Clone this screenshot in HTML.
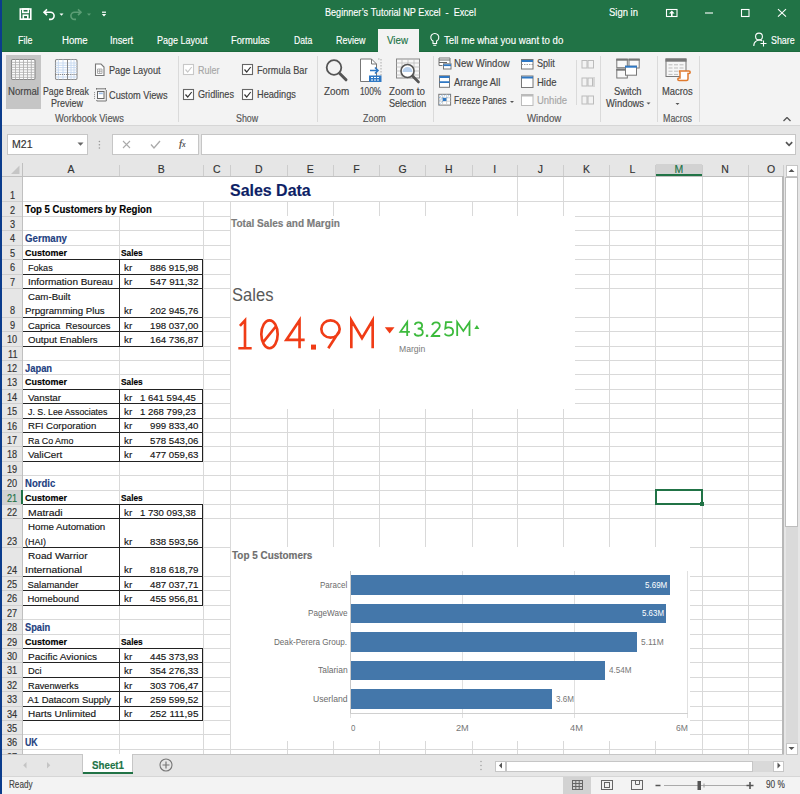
<!DOCTYPE html><html><head><meta charset="utf-8"><style>
*{margin:0;padding:0;box-sizing:border-box}
html,body{width:800px;height:794px;overflow:hidden;background:#fff;font-family:"Liberation Sans",sans-serif}
.a{position:absolute}
.t{position:absolute;white-space:nowrap;line-height:1;-webkit-text-stroke:0.15px currentColor}
svg{position:absolute;overflow:visible}
</style></head><body>

<div class="a" style="left:0.00px;top:0.00px;width:800.00px;height:52.00px;background:#217346;"></div>
<div class="a" style="left:0.00px;top:0.00px;width:2.00px;height:794.00px;background:#0b3c8c;"></div>
<div class="t" style="left:325.00px;top:8.31px;font-size:10.03px;font-family:'Liberation Sans',sans-serif;font-weight:normal;color:#fff;transform:scaleX(0.9077);transform-origin:0 0;">Beginner’s&#160;Tutorial&#160;NP&#160;Excel&#160;&#160;-&#160;&#160;Excel</div>
<div class="t" style="left:609.00px;top:8.19px;font-size:10.17px;font-family:'Liberation Sans',sans-serif;font-weight:normal;color:#fff;transform:scaleX(0.9315);transform-origin:0 0;">Sign in</div>
<svg style="left:0;top:0" width="120" height="28">
<g fill="none" stroke="#fff" stroke-width="1.6">
<rect x="20.3" y="9" width="10.5" height="10.2"/>
<rect x="22.8" y="9" width="5.5" height="3.4"/>
<rect x="23.3" y="15.2" width="4.5" height="4"/>
<path d="M44.5 12.2 H50.5 a3.6 3.6 0 0 1 0 7.2 H49" />
<path d="M47 9.3 L44 12.2 L47 15.1"/>
</g>
<path d="M59.5 13.6 h4 l-2 2.2z" fill="#fff"/>
<g fill="none" stroke="#5c9e76" stroke-width="1.6">
<path d="M80.5 12.2 H74.5 a3.6 3.6 0 0 0 0 7.2 H76" />
<path d="M78 9.3 L81 12.2 L78 15.1"/>
</g>
<path d="M87 13.6 h4 l-2 2.2z" fill="#5c9e76"/>
<rect x="102" y="11.6" width="4" height="1.2" fill="#fff"/>
<path d="M101.8 14 h4.4 l-2.2 2.6z" fill="#fff"/>
</svg>
<svg style="left:0;top:0" width="800" height="52">
<g fill="none" stroke="#fff" stroke-width="1.1">
<rect x="666.5" y="9.5" width="10.5" height="7"/>
<path d="M705 13 h8"/>
<rect x="741.5" y="9.5" width="7.5" height="7"/>
<path d="M778 9.2 l8 7.4 M786 9.2 l-8 7.4"/>
<circle cx="759" cy="36.5" r="3.4"/>
<path d="M753.8 46 a5.5 5.5 0 0 1 8.5 -5"/>
<path d="M763.5 40.5 v6 M760.5 43.5 h6"/>
<path d="M433 41 a4 4 0 1 1 3.6 0 v2.5 h-3.6z M433.3 45.3 h3"/>
</g>
<path d="M669 13.5 l2.8 -3 2.8 3z M671 13 h1.6 v3 h-1.6z" fill="#fff"/>
</svg>
<div class="t" style="left:18.40px;top:35.32px;font-size:10.61px;font-family:'Liberation Sans',sans-serif;font-weight:normal;color:#fff;transform:scaleX(0.8430);transform-origin:0 0;">File</div>
<div class="t" style="left:61.70px;top:35.32px;font-size:10.61px;font-family:'Liberation Sans',sans-serif;font-weight:normal;color:#fff;transform:scaleX(0.9072);transform-origin:0 0;">Home</div>
<div class="t" style="left:110.20px;top:35.32px;font-size:10.61px;font-family:'Liberation Sans',sans-serif;font-weight:normal;color:#fff;transform:scaleX(0.8708);transform-origin:0 0;">Insert</div>
<div class="t" style="left:156.70px;top:35.32px;font-size:10.61px;font-family:'Liberation Sans',sans-serif;font-weight:normal;color:#fff;transform:scaleX(0.8493);transform-origin:0 0;">Page Layout</div>
<div class="t" style="left:231.00px;top:35.32px;font-size:10.61px;font-family:'Liberation Sans',sans-serif;font-weight:normal;color:#fff;transform:scaleX(0.8769);transform-origin:0 0;">Formulas</div>
<div class="t" style="left:293.50px;top:35.32px;font-size:10.61px;font-family:'Liberation Sans',sans-serif;font-weight:normal;color:#fff;transform:scaleX(0.8155);transform-origin:0 0;">Data</div>
<div class="t" style="left:335.50px;top:35.32px;font-size:10.61px;font-family:'Liberation Sans',sans-serif;font-weight:normal;color:#fff;transform:scaleX(0.8448);transform-origin:0 0;">Review</div>
<div class="a" style="left:2.00px;top:51.00px;width:798.00px;height:1.00px;background:#1c6a3d;"></div>
<div class="a" style="left:377.50px;top:28.50px;width:41.00px;height:23.50px;background:#f3f3f3;"></div>
<div class="t" style="left:387.20px;top:35.32px;font-size:10.61px;font-family:'Liberation Sans',sans-serif;font-weight:normal;color:#217346;transform:scaleX(0.9205);transform-origin:0 0;">View</div>
<div class="t" style="left:444.40px;top:35.32px;font-size:10.61px;font-family:'Liberation Sans',sans-serif;font-weight:normal;color:#fff;transform:scaleX(0.9119);transform-origin:0 0;">Tell me what you want to do</div>
<div class="t" style="left:771.00px;top:34.82px;font-size:10.61px;font-family:'Liberation Sans',sans-serif;font-weight:normal;color:#fff;transform:scaleX(0.8366);transform-origin:0 0;">Share</div>
<div class="a" style="left:2.00px;top:52.00px;width:798.00px;height:73.50px;background:#f3f3f3;"></div>
<div class="a" style="left:2.00px;top:125.00px;width:798.00px;height:1.00px;background:#d6d6d6;"></div>
<div class="a" style="left:177.50px;top:56.00px;width:1.00px;height:65.50px;background:#dadada;"></div>
<div class="a" style="left:317.00px;top:56.00px;width:1.00px;height:65.50px;background:#dadada;"></div>
<div class="a" style="left:432.60px;top:56.00px;width:1.00px;height:65.50px;background:#dadada;"></div>
<div class="a" style="left:656.60px;top:56.00px;width:1.00px;height:65.50px;background:#dadada;"></div>
<div class="a" style="left:698.50px;top:56.00px;width:1.00px;height:65.50px;background:#dadada;"></div>
<div class="a" style="left:575.60px;top:60.00px;width:1.00px;height:45.00px;background:#dadada;"></div>
<div class="a" style="left:600.40px;top:56.00px;width:1.00px;height:65.50px;background:#dadada;"></div>
<div class="a" style="left:6.00px;top:55.00px;width:35.00px;height:54.40px;background:#c5c5c5;"></div>
<svg style="left:0;top:0" width="180" height="125">
<rect x="11.5" y="59.5" width="23.5" height="20" fill="#fff" stroke="#8a8a8a" stroke-width="1.1" rx="1.2"/>
<g stroke="#b0b0b0" stroke-width="0.9">
<path d="M11.5 62.3h23.5 M11.5 64.8h23.5 M11.5 67.3h23.5 M11.5 69.8h23.5 M11.5 72.3h23.5 M11.5 74.8h23.5 M11.5 77.3h23.5"/>
<path d="M15.5 59.5v20 M19.5 59.5v20 M23.5 59.5v20 M27.5 59.5v20 M31.3 59.5v20"/>
</g>
<rect x="55.5" y="59.5" width="21.5" height="20" fill="#fff" stroke="#8a8a8a" stroke-width="1.1" rx="1.2"/>
<g stroke="#c4d7ef" stroke-width="0.9">
<path d="M55.5 63h21.5 M55.5 65.3h21.5 M55.5 67.6h21.5 M55.5 70h21.5 M55.5 72.4h21.5 M55.5 77h21.5"/>
<path d="M58.3 59.5v20 M63 59.5v20 M71 59.5v20 M74 59.5v20"/>
</g>
<path d="M67.5 59.5v20" stroke="#8a8a8a" stroke-width="1"/>
<path d="M55.5 74.5h21.5" stroke="#777" stroke-width="0.9" stroke-dasharray="1.2 0.9"/>
<path d="M95.5 64 h5.5 l3 3 v8.5 h-8.5z" fill="#fff" stroke="#777" stroke-width="1.1"/>
<path d="M97.5 69 h4.5 v4.5 h-4.5z M99.7 69 v4.5 M97.5 71.2 h4.5" fill="none" stroke="#999" stroke-width="0.8"/>
<path d="M96.5 88.8 h9 M96.5 88 v1.6 M105.5 88 v1.6 M106.3 90 v11 h-9.5 v-1" fill="none" stroke="#777" stroke-width="1"/>
<rect x="97.5" y="91.5" width="6.5" height="7" fill="#fff" stroke="#666" stroke-width="1"/>
<rect x="98.8" y="92.6" width="4" height="1.6" fill="#9ec0ea"/>
<path d="M94.5 92 v7" stroke="#999" stroke-width="1" stroke-dasharray="1.2 0.8"/>
</svg>
<div class="t" style="left:7.50px;top:86.76px;font-size:10.03px;font-family:'Liberation Sans',sans-serif;font-weight:normal;color:#444;transform:scaleX(0.9585);transform-origin:0 0;">Normal</div>
<div class="t" style="left:43.00px;top:86.76px;font-size:10.03px;font-family:'Liberation Sans',sans-serif;font-weight:normal;color:#444;transform:scaleX(0.8770);transform-origin:0 0;">Page Break</div>
<div class="t" style="left:50.50px;top:99.26px;font-size:10.03px;font-family:'Liberation Sans',sans-serif;font-weight:normal;color:#444;transform:scaleX(0.8963);transform-origin:0 0;">Preview</div>
<div class="t" style="left:109.00px;top:65.91px;font-size:10.03px;font-family:'Liberation Sans',sans-serif;font-weight:normal;color:#444;transform:scaleX(0.9163);transform-origin:0 0;">Page Layout</div>
<div class="t" style="left:109.40px;top:90.51px;font-size:10.03px;font-family:'Liberation Sans',sans-serif;font-weight:normal;color:#444;transform:scaleX(0.9181);transform-origin:0 0;">Custom Views</div>
<div class="t" style="left:55.00px;top:114.21px;font-size:10.03px;font-family:'Liberation Sans',sans-serif;font-weight:normal;color:#555;transform:scaleX(0.9285);transform-origin:0 0;">Workbook Views</div>
<svg style="left:0;top:0" width="320" height="125">
<g fill="#fff" stroke-width="1.1">
<rect x="183.5" y="64.5" width="10" height="10" stroke="#c8c8c8"/>
<rect x="242.5" y="64.5" width="10" height="10" stroke="#666"/>
<rect x="183.5" y="89.5" width="10" height="10" stroke="#666"/>
<rect x="242.5" y="89.5" width="10" height="10" stroke="#666"/>
</g>
<g fill="none" stroke-width="1.2">
<path d="M185.5 69.5 l2.2 2.5 l4 -5" stroke="#c8c8c8"/>
<path d="M244.5 69.5 l2.2 2.5 l4 -5" stroke="#333"/>
<path d="M185.5 94.5 l2.2 2.5 l4 -5" stroke="#333"/>
<path d="M244.5 94.5 l2.2 2.5 l4 -5" stroke="#333"/>
</g>
</svg>
<div class="t" style="left:198.00px;top:65.91px;font-size:10.03px;font-family:'Liberation Sans',sans-serif;font-weight:normal;color:#a6a6a6;transform:scaleX(0.8928);transform-origin:0 0;">Ruler</div>
<div class="t" style="left:257.00px;top:65.91px;font-size:10.03px;font-family:'Liberation Sans',sans-serif;font-weight:normal;color:#444;transform:scaleX(0.9155);transform-origin:0 0;">Formula Bar</div>
<div class="t" style="left:198.00px;top:90.41px;font-size:10.03px;font-family:'Liberation Sans',sans-serif;font-weight:normal;color:#444;transform:scaleX(0.9099);transform-origin:0 0;">Gridlines</div>
<div class="t" style="left:257.00px;top:90.41px;font-size:10.03px;font-family:'Liberation Sans',sans-serif;font-weight:normal;color:#444;transform:scaleX(0.9180);transform-origin:0 0;">Headings</div>
<div class="t" style="left:235.70px;top:114.21px;font-size:10.03px;font-family:'Liberation Sans',sans-serif;font-weight:normal;color:#555;transform:scaleX(0.8837);transform-origin:0 0;">Show</div>
<svg style="left:0;top:0" width="440" height="125">
<circle cx="334" cy="67.5" r="7.3" fill="none" stroke="#555" stroke-width="1.8"/>
<path d="M339.5 73.3 l6.5 6.5" stroke="#555" stroke-width="3" stroke-linecap="round"/>
<path d="M360.5 59 h11 l5 5 v17.5 h-16z" fill="#fff" stroke="#777" stroke-width="1"/>
<path d="M371.5 59 v5 h5" fill="none" stroke="#777" stroke-width="1"/>
<path d="M378 59 h3 v17" fill="none" stroke="#999" stroke-width="0.8" stroke-dasharray="1.5 1.5"/>
<path d="M370 70.5 h8 M375 67.5 l3 3 l-3 3" fill="none" stroke="#2f78c4" stroke-width="1.6"/>
<rect x="369" y="75.5" width="12.5" height="6.5" fill="#2f78c4"/>
<path d="M371 77.5h2 M374 77.5h2 M377 77.5h2 M371 80h2 M374 80h2 M377 80h2" stroke="#fff" stroke-width="1"/>
<rect x="396.5" y="59" width="23" height="19" fill="#f7f7f7" stroke="#888" stroke-width="1"/>
<path d="M396.5 63 h23 M396.5 67 h23 M396.5 71 h23 M396.5 75 h23 M402 59v19 M408 59v19 M414 59v19" stroke="#bbb" stroke-width="0.8"/>
<circle cx="407.5" cy="71" r="6.5" fill="#fff" stroke="#555" stroke-width="1.6"/>
<path d="M402.5 72 a5 5 0 0 1 10 0z" fill="#b9d1ee"/>
<path d="M412.5 76 l6 6" stroke="#555" stroke-width="2.6" stroke-linecap="round"/>
</svg>
<div class="t" style="left:324.00px;top:86.76px;font-size:10.03px;font-family:'Liberation Sans',sans-serif;font-weight:normal;color:#444;transform:scaleX(0.9834);transform-origin:0 0;">Zoom</div>
<div class="t" style="left:359.70px;top:86.76px;font-size:10.03px;font-family:'Liberation Sans',sans-serif;font-weight:normal;color:#444;transform:scaleX(0.8296);transform-origin:0 0;">100%</div>
<div class="t" style="left:389.20px;top:86.76px;font-size:10.03px;font-family:'Liberation Sans',sans-serif;font-weight:normal;color:#444;transform:scaleX(0.9781);transform-origin:0 0;">Zoom to</div>
<div class="t" style="left:388.80px;top:99.21px;font-size:10.03px;font-family:'Liberation Sans',sans-serif;font-weight:normal;color:#444;transform:scaleX(0.9062);transform-origin:0 0;">Selection</div>
<div class="t" style="left:363.00px;top:114.01px;font-size:10.03px;font-family:'Liberation Sans',sans-serif;font-weight:normal;color:#555;transform:scaleX(0.8898);transform-origin:0 0;">Zoom</div>
<svg style="left:0;top:0" width="800" height="125">
<g fill="#fff" stroke="#777" stroke-width="1">
<path d="M442.5 65.5 h-3.5 v-7.5 h11 v5"/>
<rect x="443.5" y="63.8" width="7.5" height="5.2"/>
<rect x="439.5" y="75.8" width="10" height="11.5"/>
<rect x="438.8" y="94.3" width="11.8" height="10.8"/>
<rect x="521.5" y="59.5" width="11.5" height="9.5"/>
<rect x="521.5" y="76" width="11.5" height="11.5"/>
<rect x="521.5" y="94.5" width="11.5" height="11" stroke="#bbb"/>
</g>
<path d="M439 60 h11 M439 62.5 h8" stroke="#666" stroke-width="1.2"/>
<path d="M443.5 65.2 h7.5" stroke="#2f78c4" stroke-width="1.8"/>
<path d="M439.5 77 h10 M439.5 82.2 h10" stroke="#2f78c4" stroke-width="1.8"/>
<path d="M438.8 97.8 h11.8 M438.8 101.2 h11.8 M442.6 94.3 v10.8 M446.6 94.3 v10.8" stroke="#c8c8c8" stroke-width="0.8"/>
<path d="M439.3 104.6 l3.3 -3.3 M439.3 101.2 l3.3 -3.3 M439.3 97.8 l3.3 -3.3 M442.6 97.8 l3.3 -3.3 M446.6 97.8 l3.3 -3.3" stroke="#5b9bd5" stroke-width="0.9" stroke-dasharray="1 0.8"/>
<rect x="442.8" y="98" width="3.6" height="3" fill="#2f78c4"/>
<path d="M521.5 61 h11.5 M521.5 77.5 h11.5" stroke="#2f78c4" stroke-width="2"/>
<path d="M521.5 64.5 h11.5" stroke="#888" stroke-width="0.8" stroke-dasharray="1.5 1"/>
<path d="M521.5 95.5 h11.5" stroke="#bbb" stroke-width="2"/>
<path d="M510 101 h4 l-2 2z M646.5 102.5 h4 l-2 2z M675.5 103 h4 l-2 2z" fill="#555"/>
<g fill="none" stroke="#bbb" stroke-width="1">
<rect x="582" y="60.5" width="5" height="7.5"/><rect x="588" y="60.5" width="5.5" height="7.5"/>
<rect x="582" y="78" width="5" height="8"/><rect x="588" y="78" width="4.5" height="8"/><path d="M594 77 v10"/>
<rect x="582" y="96" width="5" height="8"/><rect x="588" y="96" width="5.5" height="8"/>
</g>
<g stroke="#777" stroke-width="1" fill="#f9f9f9">
<rect x="616.8" y="59.2" width="10.5" height="8.5"/><rect x="629" y="59.2" width="10.2" height="8.8"/>
<rect x="616.8" y="69.2" width="10.5" height="8.8"/>
</g>
<rect x="616.3" y="58.7" width="11.5" height="2" fill="#777"/><rect x="628.5" y="58.7" width="11.2" height="2" fill="#777"/><rect x="616.3" y="68.7" width="11.5" height="2" fill="#777"/>
<rect x="625.5" y="66.2" width="11" height="9" fill="#fff" stroke="#777" stroke-width="1"/>
<rect x="625" y="65.7" width="12" height="2" fill="#2f78c4"/>
<rect x="666" y="59" width="20" height="17.5" fill="#f6f6f6" stroke="#777" stroke-width="1"/>
<rect x="665.5" y="58.5" width="21" height="3.2" fill="#777"/>
<path d="M668.5 64.8 h4 M674 64.8 h4 M679.5 64.8 h4 M668.5 68 h4 M674 68 h4 M679.5 68 h4 M668.5 71.2 h4 M674 71.2 h4 M668.5 74.4 h4 M674 74.4 h4" stroke="#bdbdbd" stroke-width="1"/>
<path d="M679.5 71 h9.5 a1.2 1.2 0 0 1 0 2.4 h-1 v5.5 a1.5 1.5 0 0 1 -1.5 1.5 h-7.5 a1.2 1.2 0 0 1 0 -2.4 h1 v-5.5 a1.5 1.5 0 0 1 -0.5 -1.5z" fill="#fff" stroke="#e07a2e" stroke-width="1.5"/>
<path d="M787 117.5 l-3.5 3.5 M787 117.5 l3.5 3.5" stroke="#555" stroke-width="1.3" fill="none"/>
</svg>
<div class="t" style="left:454.00px;top:59.41px;font-size:10.03px;font-family:'Liberation Sans',sans-serif;font-weight:normal;color:#444;transform:scaleX(0.9510);transform-origin:0 0;">New Window</div>
<div class="t" style="left:454.00px;top:77.76px;font-size:10.03px;font-family:'Liberation Sans',sans-serif;font-weight:normal;color:#444;transform:scaleX(0.9441);transform-origin:0 0;">Arrange All</div>
<div class="t" style="left:454.00px;top:95.61px;font-size:10.03px;font-family:'Liberation Sans',sans-serif;font-weight:normal;color:#444;transform:scaleX(0.8409);transform-origin:0 0;">Freeze Panes</div>
<div class="t" style="left:536.50px;top:59.41px;font-size:10.03px;font-family:'Liberation Sans',sans-serif;font-weight:normal;color:#444;transform:scaleX(0.9074);transform-origin:0 0;">Split</div>
<div class="t" style="left:536.50px;top:77.76px;font-size:10.03px;font-family:'Liberation Sans',sans-serif;font-weight:normal;color:#444;transform:scaleX(0.9462);transform-origin:0 0;">Hide</div>
<div class="t" style="left:536.50px;top:95.61px;font-size:10.03px;font-family:'Liberation Sans',sans-serif;font-weight:normal;color:#a6a6a6;transform:scaleX(0.9468);transform-origin:0 0;">Unhide</div>
<div class="t" style="left:527.20px;top:113.61px;font-size:10.03px;font-family:'Liberation Sans',sans-serif;font-weight:normal;color:#555;transform:scaleX(0.9635);transform-origin:0 0;">Window</div>
<div class="t" style="left:614.00px;top:86.76px;font-size:10.03px;font-family:'Liberation Sans',sans-serif;font-weight:normal;color:#444;transform:scaleX(0.9345);transform-origin:0 0;">Switch</div>
<div class="t" style="left:606.00px;top:99.31px;font-size:10.03px;font-family:'Liberation Sans',sans-serif;font-weight:normal;color:#444;transform:scaleX(0.9369);transform-origin:0 0;">Windows</div>
<div class="t" style="left:662.00px;top:86.76px;font-size:10.03px;font-family:'Liberation Sans',sans-serif;font-weight:normal;color:#444;transform:scaleX(0.9363);transform-origin:0 0;">Macros</div>
<div class="t" style="left:662.90px;top:113.81px;font-size:10.03px;font-family:'Liberation Sans',sans-serif;font-weight:normal;color:#555;transform:scaleX(0.8846);transform-origin:0 0;">Macros</div>
<div class="a" style="left:2.00px;top:126.00px;width:798.00px;height:37.00px;background:#e6e6e6;"></div>
<div class="a" style="left:6.50px;top:134.00px;width:81.00px;height:20.50px;background:#fff;border:1px solid #c6c6c6"></div>
<div class="t" style="left:12.00px;top:140.14px;font-size:10.47px;font-family:'Liberation Sans',sans-serif;font-weight:normal;color:#333;transform:scaleX(1.0071);transform-origin:0 0;">M21</div>
<div class="a" style="left:111.50px;top:134.00px;width:87.00px;height:20.50px;background:#fff;border:1px solid #c6c6c6"></div>
<div class="a" style="left:201.00px;top:134.00px;width:595.00px;height:20.50px;background:#fff;border:1px solid #c6c6c6"></div>
<svg style="left:0;top:0" width="800" height="163">
<path d="M77.5 142.5 h6 l-3 3.2z" fill="#666"/>
<g fill="#999"><circle cx="99.4" cy="141.5" r="0.8"/><circle cx="99.4" cy="144.8" r="0.8"/><circle cx="99.4" cy="148" r="0.8"/></g>
<path d="M123 141 l7 7 M130 141 l-7 7" stroke="#aaa" stroke-width="1.1"/>
<path d="M151 144.5 l3 3.5 l6 -7" stroke="#aaa" stroke-width="1.3" fill="none"/>
<path d="M786 142.2 l3.1 3.1 l3.1 -3.1" stroke="#555" stroke-width="1.7" fill="none"/>
</svg>
<div class="t" style="left:179px;top:137.5px;font-family:'Liberation Serif',serif;font-style:italic;font-size:11px;color:#444">f<span style="font-size:8px">x</span></div>
<div class="a" style="left:2.00px;top:163.00px;width:781.50px;height:591.00px;background:#fff;"></div>
<div class="a" style="left:2.00px;top:163.00px;width:781.50px;height:13.00px;background:#e6e6e6;"></div>
<div class="a" style="left:2.00px;top:176.00px;width:20.50px;height:578.00px;background:#e6e6e6;"></div>
<div class="a" style="left:22.50px;top:201.00px;width:761.00px;height:1.00px;background:#d9d9d9;"></div>
<div class="a" style="left:2.00px;top:201.00px;width:20.50px;height:1.00px;background:#cfcfcf;"></div>
<div class="a" style="left:22.50px;top:215.90px;width:208.25px;height:1.00px;background:#d9d9d9;"></div>
<div class="a" style="left:575.25px;top:215.90px;width:208.25px;height:1.00px;background:#d9d9d9;"></div>
<div class="a" style="left:2.00px;top:215.90px;width:20.50px;height:1.00px;background:#cfcfcf;"></div>
<div class="a" style="left:22.50px;top:230.30px;width:208.25px;height:1.00px;background:#d9d9d9;"></div>
<div class="a" style="left:575.25px;top:230.30px;width:208.25px;height:1.00px;background:#d9d9d9;"></div>
<div class="a" style="left:2.00px;top:230.30px;width:20.50px;height:1.00px;background:#cfcfcf;"></div>
<div class="a" style="left:22.50px;top:244.70px;width:208.25px;height:1.00px;background:#d9d9d9;"></div>
<div class="a" style="left:575.25px;top:244.70px;width:208.25px;height:1.00px;background:#d9d9d9;"></div>
<div class="a" style="left:2.00px;top:244.70px;width:20.50px;height:1.00px;background:#cfcfcf;"></div>
<div class="a" style="left:22.50px;top:259.10px;width:208.25px;height:1.00px;background:#d9d9d9;"></div>
<div class="a" style="left:575.25px;top:259.10px;width:208.25px;height:1.00px;background:#d9d9d9;"></div>
<div class="a" style="left:2.00px;top:259.10px;width:20.50px;height:1.00px;background:#cfcfcf;"></div>
<div class="a" style="left:22.50px;top:273.50px;width:208.25px;height:1.00px;background:#d9d9d9;"></div>
<div class="a" style="left:575.25px;top:273.50px;width:208.25px;height:1.00px;background:#d9d9d9;"></div>
<div class="a" style="left:2.00px;top:273.50px;width:20.50px;height:1.00px;background:#cfcfcf;"></div>
<div class="a" style="left:22.50px;top:287.90px;width:208.25px;height:1.00px;background:#d9d9d9;"></div>
<div class="a" style="left:575.25px;top:287.90px;width:208.25px;height:1.00px;background:#d9d9d9;"></div>
<div class="a" style="left:2.00px;top:287.90px;width:20.50px;height:1.00px;background:#cfcfcf;"></div>
<div class="a" style="left:22.50px;top:316.70px;width:208.25px;height:1.00px;background:#d9d9d9;"></div>
<div class="a" style="left:575.25px;top:316.70px;width:208.25px;height:1.00px;background:#d9d9d9;"></div>
<div class="a" style="left:2.00px;top:316.70px;width:20.50px;height:1.00px;background:#cfcfcf;"></div>
<div class="a" style="left:22.50px;top:331.10px;width:208.25px;height:1.00px;background:#d9d9d9;"></div>
<div class="a" style="left:575.25px;top:331.10px;width:208.25px;height:1.00px;background:#d9d9d9;"></div>
<div class="a" style="left:2.00px;top:331.10px;width:20.50px;height:1.00px;background:#cfcfcf;"></div>
<div class="a" style="left:22.50px;top:345.50px;width:208.25px;height:1.00px;background:#d9d9d9;"></div>
<div class="a" style="left:575.25px;top:345.50px;width:208.25px;height:1.00px;background:#d9d9d9;"></div>
<div class="a" style="left:2.00px;top:345.50px;width:20.50px;height:1.00px;background:#cfcfcf;"></div>
<div class="a" style="left:22.50px;top:359.90px;width:208.25px;height:1.00px;background:#d9d9d9;"></div>
<div class="a" style="left:575.25px;top:359.90px;width:208.25px;height:1.00px;background:#d9d9d9;"></div>
<div class="a" style="left:2.00px;top:359.90px;width:20.50px;height:1.00px;background:#cfcfcf;"></div>
<div class="a" style="left:22.50px;top:374.30px;width:208.25px;height:1.00px;background:#d9d9d9;"></div>
<div class="a" style="left:575.25px;top:374.30px;width:208.25px;height:1.00px;background:#d9d9d9;"></div>
<div class="a" style="left:2.00px;top:374.30px;width:20.50px;height:1.00px;background:#cfcfcf;"></div>
<div class="a" style="left:22.50px;top:388.70px;width:208.25px;height:1.00px;background:#d9d9d9;"></div>
<div class="a" style="left:575.25px;top:388.70px;width:208.25px;height:1.00px;background:#d9d9d9;"></div>
<div class="a" style="left:2.00px;top:388.70px;width:20.50px;height:1.00px;background:#cfcfcf;"></div>
<div class="a" style="left:22.50px;top:403.10px;width:208.25px;height:1.00px;background:#d9d9d9;"></div>
<div class="a" style="left:575.25px;top:403.10px;width:208.25px;height:1.00px;background:#d9d9d9;"></div>
<div class="a" style="left:2.00px;top:403.10px;width:20.50px;height:1.00px;background:#cfcfcf;"></div>
<div class="a" style="left:22.50px;top:417.50px;width:761.00px;height:1.00px;background:#d9d9d9;"></div>
<div class="a" style="left:2.00px;top:417.50px;width:20.50px;height:1.00px;background:#cfcfcf;"></div>
<div class="a" style="left:22.50px;top:431.90px;width:761.00px;height:1.00px;background:#d9d9d9;"></div>
<div class="a" style="left:2.00px;top:431.90px;width:20.50px;height:1.00px;background:#cfcfcf;"></div>
<div class="a" style="left:22.50px;top:446.30px;width:761.00px;height:1.00px;background:#d9d9d9;"></div>
<div class="a" style="left:2.00px;top:446.30px;width:20.50px;height:1.00px;background:#cfcfcf;"></div>
<div class="a" style="left:22.50px;top:460.70px;width:761.00px;height:1.00px;background:#d9d9d9;"></div>
<div class="a" style="left:2.00px;top:460.70px;width:20.50px;height:1.00px;background:#cfcfcf;"></div>
<div class="a" style="left:22.50px;top:475.10px;width:761.00px;height:1.00px;background:#d9d9d9;"></div>
<div class="a" style="left:2.00px;top:475.10px;width:20.50px;height:1.00px;background:#cfcfcf;"></div>
<div class="a" style="left:22.50px;top:489.50px;width:761.00px;height:1.00px;background:#d9d9d9;"></div>
<div class="a" style="left:2.00px;top:489.50px;width:20.50px;height:1.00px;background:#cfcfcf;"></div>
<div class="a" style="left:22.50px;top:503.90px;width:761.00px;height:1.00px;background:#d9d9d9;"></div>
<div class="a" style="left:2.00px;top:503.90px;width:20.50px;height:1.00px;background:#cfcfcf;"></div>
<div class="a" style="left:22.50px;top:518.30px;width:761.00px;height:1.00px;background:#d9d9d9;"></div>
<div class="a" style="left:2.00px;top:518.30px;width:20.50px;height:1.00px;background:#cfcfcf;"></div>
<div class="a" style="left:22.50px;top:547.10px;width:208.25px;height:1.00px;background:#d9d9d9;"></div>
<div class="a" style="left:690.25px;top:547.10px;width:93.25px;height:1.00px;background:#d9d9d9;"></div>
<div class="a" style="left:2.00px;top:547.10px;width:20.50px;height:1.00px;background:#cfcfcf;"></div>
<div class="a" style="left:22.50px;top:575.90px;width:208.25px;height:1.00px;background:#d9d9d9;"></div>
<div class="a" style="left:690.25px;top:575.90px;width:93.25px;height:1.00px;background:#d9d9d9;"></div>
<div class="a" style="left:2.00px;top:575.90px;width:20.50px;height:1.00px;background:#cfcfcf;"></div>
<div class="a" style="left:22.50px;top:590.30px;width:208.25px;height:1.00px;background:#d9d9d9;"></div>
<div class="a" style="left:690.25px;top:590.30px;width:93.25px;height:1.00px;background:#d9d9d9;"></div>
<div class="a" style="left:2.00px;top:590.30px;width:20.50px;height:1.00px;background:#cfcfcf;"></div>
<div class="a" style="left:22.50px;top:604.70px;width:208.25px;height:1.00px;background:#d9d9d9;"></div>
<div class="a" style="left:690.25px;top:604.70px;width:93.25px;height:1.00px;background:#d9d9d9;"></div>
<div class="a" style="left:2.00px;top:604.70px;width:20.50px;height:1.00px;background:#cfcfcf;"></div>
<div class="a" style="left:22.50px;top:619.10px;width:208.25px;height:1.00px;background:#d9d9d9;"></div>
<div class="a" style="left:690.25px;top:619.10px;width:93.25px;height:1.00px;background:#d9d9d9;"></div>
<div class="a" style="left:2.00px;top:619.10px;width:20.50px;height:1.00px;background:#cfcfcf;"></div>
<div class="a" style="left:22.50px;top:633.50px;width:208.25px;height:1.00px;background:#d9d9d9;"></div>
<div class="a" style="left:690.25px;top:633.50px;width:93.25px;height:1.00px;background:#d9d9d9;"></div>
<div class="a" style="left:2.00px;top:633.50px;width:20.50px;height:1.00px;background:#cfcfcf;"></div>
<div class="a" style="left:22.50px;top:647.90px;width:208.25px;height:1.00px;background:#d9d9d9;"></div>
<div class="a" style="left:690.25px;top:647.90px;width:93.25px;height:1.00px;background:#d9d9d9;"></div>
<div class="a" style="left:2.00px;top:647.90px;width:20.50px;height:1.00px;background:#cfcfcf;"></div>
<div class="a" style="left:22.50px;top:662.30px;width:208.25px;height:1.00px;background:#d9d9d9;"></div>
<div class="a" style="left:690.25px;top:662.30px;width:93.25px;height:1.00px;background:#d9d9d9;"></div>
<div class="a" style="left:2.00px;top:662.30px;width:20.50px;height:1.00px;background:#cfcfcf;"></div>
<div class="a" style="left:22.50px;top:676.70px;width:208.25px;height:1.00px;background:#d9d9d9;"></div>
<div class="a" style="left:690.25px;top:676.70px;width:93.25px;height:1.00px;background:#d9d9d9;"></div>
<div class="a" style="left:2.00px;top:676.70px;width:20.50px;height:1.00px;background:#cfcfcf;"></div>
<div class="a" style="left:22.50px;top:691.10px;width:208.25px;height:1.00px;background:#d9d9d9;"></div>
<div class="a" style="left:690.25px;top:691.10px;width:93.25px;height:1.00px;background:#d9d9d9;"></div>
<div class="a" style="left:2.00px;top:691.10px;width:20.50px;height:1.00px;background:#cfcfcf;"></div>
<div class="a" style="left:22.50px;top:705.50px;width:208.25px;height:1.00px;background:#d9d9d9;"></div>
<div class="a" style="left:690.25px;top:705.50px;width:93.25px;height:1.00px;background:#d9d9d9;"></div>
<div class="a" style="left:2.00px;top:705.50px;width:20.50px;height:1.00px;background:#cfcfcf;"></div>
<div class="a" style="left:22.50px;top:719.90px;width:208.25px;height:1.00px;background:#d9d9d9;"></div>
<div class="a" style="left:690.25px;top:719.90px;width:93.25px;height:1.00px;background:#d9d9d9;"></div>
<div class="a" style="left:2.00px;top:719.90px;width:20.50px;height:1.00px;background:#cfcfcf;"></div>
<div class="a" style="left:22.50px;top:734.30px;width:208.25px;height:1.00px;background:#d9d9d9;"></div>
<div class="a" style="left:690.25px;top:734.30px;width:93.25px;height:1.00px;background:#d9d9d9;"></div>
<div class="a" style="left:2.00px;top:734.30px;width:20.50px;height:1.00px;background:#cfcfcf;"></div>
<div class="a" style="left:22.50px;top:748.70px;width:761.00px;height:1.00px;background:#d9d9d9;"></div>
<div class="a" style="left:2.00px;top:748.70px;width:20.50px;height:1.00px;background:#cfcfcf;"></div>
<div class="a" style="left:119.00px;top:216.40px;width:1.00px;height:537.60px;background:#d9d9d9;"></div>
<div class="a" style="left:202.50px;top:201.50px;width:1.00px;height:552.50px;background:#d9d9d9;"></div>
<div class="a" style="left:230.00px;top:201.50px;width:1.00px;height:552.50px;background:#d9d9d9;"></div>
<div class="a" style="left:286.50px;top:201.50px;width:1.00px;height:14.25px;background:#d9d9d9;"></div>
<div class="a" style="left:286.50px;top:409.25px;width:1.00px;height:138.00px;background:#d9d9d9;"></div>
<div class="a" style="left:286.50px;top:740.75px;width:1.00px;height:13.25px;background:#d9d9d9;"></div>
<div class="a" style="left:332.75px;top:201.50px;width:1.00px;height:14.25px;background:#d9d9d9;"></div>
<div class="a" style="left:332.75px;top:409.25px;width:1.00px;height:138.00px;background:#d9d9d9;"></div>
<div class="a" style="left:332.75px;top:740.75px;width:1.00px;height:13.25px;background:#d9d9d9;"></div>
<div class="a" style="left:379.00px;top:201.50px;width:1.00px;height:14.25px;background:#d9d9d9;"></div>
<div class="a" style="left:379.00px;top:409.25px;width:1.00px;height:138.00px;background:#d9d9d9;"></div>
<div class="a" style="left:379.00px;top:740.75px;width:1.00px;height:13.25px;background:#d9d9d9;"></div>
<div class="a" style="left:425.00px;top:201.50px;width:1.00px;height:14.25px;background:#d9d9d9;"></div>
<div class="a" style="left:425.00px;top:409.25px;width:1.00px;height:138.00px;background:#d9d9d9;"></div>
<div class="a" style="left:425.00px;top:740.75px;width:1.00px;height:13.25px;background:#d9d9d9;"></div>
<div class="a" style="left:471.50px;top:201.50px;width:1.00px;height:14.25px;background:#d9d9d9;"></div>
<div class="a" style="left:471.50px;top:409.25px;width:1.00px;height:138.00px;background:#d9d9d9;"></div>
<div class="a" style="left:471.50px;top:740.75px;width:1.00px;height:13.25px;background:#d9d9d9;"></div>
<div class="a" style="left:517.00px;top:176.00px;width:1.00px;height:39.75px;background:#d9d9d9;"></div>
<div class="a" style="left:517.00px;top:409.25px;width:1.00px;height:138.00px;background:#d9d9d9;"></div>
<div class="a" style="left:517.00px;top:740.75px;width:1.00px;height:13.25px;background:#d9d9d9;"></div>
<div class="a" style="left:562.75px;top:176.00px;width:1.00px;height:39.75px;background:#d9d9d9;"></div>
<div class="a" style="left:562.75px;top:409.25px;width:1.00px;height:138.00px;background:#d9d9d9;"></div>
<div class="a" style="left:562.75px;top:740.75px;width:1.00px;height:13.25px;background:#d9d9d9;"></div>
<div class="a" style="left:609.00px;top:176.00px;width:1.00px;height:371.25px;background:#d9d9d9;"></div>
<div class="a" style="left:609.00px;top:740.75px;width:1.00px;height:13.25px;background:#d9d9d9;"></div>
<div class="a" style="left:655.00px;top:176.00px;width:1.00px;height:371.25px;background:#d9d9d9;"></div>
<div class="a" style="left:655.00px;top:740.75px;width:1.00px;height:13.25px;background:#d9d9d9;"></div>
<div class="a" style="left:701.50px;top:176.00px;width:1.00px;height:578.00px;background:#d9d9d9;"></div>
<div class="a" style="left:747.50px;top:176.00px;width:1.00px;height:578.00px;background:#d9d9d9;"></div>
<div class="a" style="left:119.00px;top:165.00px;width:1.00px;height:11.00px;background:#cdcdcd;"></div>

<div class="a" style="left:202.50px;top:165.00px;width:1.00px;height:11.00px;background:#cdcdcd;"></div>

<div class="a" style="left:230.00px;top:165.00px;width:1.00px;height:11.00px;background:#cdcdcd;"></div>

<div class="a" style="left:286.50px;top:165.00px;width:1.00px;height:11.00px;background:#cdcdcd;"></div>

<div class="a" style="left:332.75px;top:165.00px;width:1.00px;height:11.00px;background:#cdcdcd;"></div>

<div class="a" style="left:379.00px;top:165.00px;width:1.00px;height:11.00px;background:#cdcdcd;"></div>

<div class="a" style="left:425.00px;top:165.00px;width:1.00px;height:11.00px;background:#cdcdcd;"></div>

<div class="a" style="left:471.50px;top:165.00px;width:1.00px;height:11.00px;background:#cdcdcd;"></div>

<div class="a" style="left:517.00px;top:165.00px;width:1.00px;height:11.00px;background:#cdcdcd;"></div>

<div class="a" style="left:562.75px;top:165.00px;width:1.00px;height:11.00px;background:#cdcdcd;"></div>

<div class="a" style="left:609.00px;top:165.00px;width:1.00px;height:11.00px;background:#cdcdcd;"></div>

<div class="a" style="left:655.00px;top:165.00px;width:1.00px;height:11.00px;background:#cdcdcd;"></div>

<div class="a" style="left:701.50px;top:165.00px;width:1.00px;height:11.00px;background:#cdcdcd;"></div>

<div class="a" style="left:747.50px;top:165.00px;width:1.00px;height:11.00px;background:#cdcdcd;"></div>

<div class="a" style="left:783.00px;top:165.00px;width:1.00px;height:11.00px;background:#cdcdcd;"></div>

<div class="t" style="left:22.50px;width:97.00px;text-align:center;top:164.64px;font-size:10.47px;color:#333">A</div>
<div class="t" style="left:119.50px;width:83.50px;text-align:center;top:164.64px;font-size:10.47px;color:#333">B</div>
<div class="t" style="left:203.00px;width:27.50px;text-align:center;top:164.64px;font-size:10.47px;color:#333">C</div>
<div class="t" style="left:230.50px;width:56.50px;text-align:center;top:164.64px;font-size:10.47px;color:#333">D</div>
<div class="t" style="left:287.00px;width:46.25px;text-align:center;top:164.64px;font-size:10.47px;color:#333">E</div>
<div class="t" style="left:333.25px;width:46.25px;text-align:center;top:164.64px;font-size:10.47px;color:#333">F</div>
<div class="t" style="left:379.50px;width:46.00px;text-align:center;top:164.64px;font-size:10.47px;color:#333">G</div>
<div class="t" style="left:425.50px;width:46.50px;text-align:center;top:164.64px;font-size:10.47px;color:#333">H</div>
<div class="t" style="left:472.00px;width:45.50px;text-align:center;top:164.64px;font-size:10.47px;color:#333">I</div>
<div class="t" style="left:517.50px;width:45.75px;text-align:center;top:164.64px;font-size:10.47px;color:#333">J</div>
<div class="t" style="left:563.25px;width:46.25px;text-align:center;top:164.64px;font-size:10.47px;color:#333">K</div>
<div class="t" style="left:609.50px;width:46.00px;text-align:center;top:164.64px;font-size:10.47px;color:#333">L</div>
<div class="t" style="left:655.50px;width:46.50px;text-align:center;top:164.64px;font-size:10.47px;color:#217346">M</div>
<div class="t" style="left:702.00px;width:46.00px;text-align:center;top:164.64px;font-size:10.47px;color:#333">N</div>
<div class="t" style="left:748.00px;width:46.00px;text-align:center;top:164.64px;font-size:10.47px;color:#333">O</div>
<div class="a" style="left:655.50px;top:164.00px;width:46.50px;height:12.00px;background:#d2d2d2;"></div>
<div class="a" style="left:655.50px;top:174.00px;width:46.50px;height:2.00px;background:#217346;"></div>
<div class="t" style="left:655.5px;width:46.5px;text-align:center;top:164.64px;font-size:10.47px;color:#217346">M</div>
<div class="a" style="left:2.00px;top:175.50px;width:781.50px;height:1.00px;background:#c0c0c0;"></div>
<div class="a" style="left:22.00px;top:163.00px;width:1.00px;height:591.00px;background:#c0c0c0;"></div>
<div class="a" style="left:782.30px;top:176.00px;width:1.40px;height:578.00px;background:#b8b8b8;"></div>
<div class="a" style="left:2.00px;top:753.50px;width:781.50px;height:1.00px;background:#b8b8b8;"></div>
<svg style="left:0;top:0" width="30" height="180"><path d="M19.5 165.5 v8.5 h-8.5z" fill="#c5c5c5"/></svg>
<div class="t" style="left:9.86px;top:190.69px;font-size:10.17px;font-family:'Liberation Sans',sans-serif;font-weight:normal;color:#333;transform:scaleX(0.9000);transform-origin:0 0;">1</div>
<div class="t" style="left:9.86px;top:205.59px;font-size:10.17px;font-family:'Liberation Sans',sans-serif;font-weight:normal;color:#333;transform:scaleX(0.9000);transform-origin:0 0;">2</div>
<div class="t" style="left:9.86px;top:219.99px;font-size:10.17px;font-family:'Liberation Sans',sans-serif;font-weight:normal;color:#333;transform:scaleX(0.9000);transform-origin:0 0;">3</div>
<div class="t" style="left:9.86px;top:234.39px;font-size:10.17px;font-family:'Liberation Sans',sans-serif;font-weight:normal;color:#333;transform:scaleX(0.9000);transform-origin:0 0;">4</div>
<div class="t" style="left:9.86px;top:248.79px;font-size:10.17px;font-family:'Liberation Sans',sans-serif;font-weight:normal;color:#333;transform:scaleX(0.9000);transform-origin:0 0;">5</div>
<div class="t" style="left:9.86px;top:263.19px;font-size:10.17px;font-family:'Liberation Sans',sans-serif;font-weight:normal;color:#333;transform:scaleX(0.9000);transform-origin:0 0;">6</div>
<div class="t" style="left:9.86px;top:277.59px;font-size:10.17px;font-family:'Liberation Sans',sans-serif;font-weight:normal;color:#333;transform:scaleX(0.9000);transform-origin:0 0;">7</div>
<div class="t" style="left:9.86px;top:306.39px;font-size:10.17px;font-family:'Liberation Sans',sans-serif;font-weight:normal;color:#333;transform:scaleX(0.9000);transform-origin:0 0;">8</div>
<div class="t" style="left:9.86px;top:320.79px;font-size:10.17px;font-family:'Liberation Sans',sans-serif;font-weight:normal;color:#333;transform:scaleX(0.9000);transform-origin:0 0;">9</div>
<div class="t" style="left:7.32px;top:335.19px;font-size:10.17px;font-family:'Liberation Sans',sans-serif;font-weight:normal;color:#333;transform:scaleX(0.9000);transform-origin:0 0;">10</div>
<div class="t" style="left:7.64px;top:349.59px;font-size:10.17px;font-family:'Liberation Sans',sans-serif;font-weight:normal;color:#333;transform:scaleX(0.9000);transform-origin:0 0;">11</div>
<div class="t" style="left:7.32px;top:363.99px;font-size:10.17px;font-family:'Liberation Sans',sans-serif;font-weight:normal;color:#333;transform:scaleX(0.9000);transform-origin:0 0;">12</div>
<div class="t" style="left:7.32px;top:378.39px;font-size:10.17px;font-family:'Liberation Sans',sans-serif;font-weight:normal;color:#333;transform:scaleX(0.9000);transform-origin:0 0;">13</div>
<div class="t" style="left:7.32px;top:392.79px;font-size:10.17px;font-family:'Liberation Sans',sans-serif;font-weight:normal;color:#333;transform:scaleX(0.9000);transform-origin:0 0;">14</div>
<div class="t" style="left:7.32px;top:407.19px;font-size:10.17px;font-family:'Liberation Sans',sans-serif;font-weight:normal;color:#333;transform:scaleX(0.9000);transform-origin:0 0;">15</div>
<div class="t" style="left:7.32px;top:421.59px;font-size:10.17px;font-family:'Liberation Sans',sans-serif;font-weight:normal;color:#333;transform:scaleX(0.9000);transform-origin:0 0;">16</div>
<div class="t" style="left:7.32px;top:435.99px;font-size:10.17px;font-family:'Liberation Sans',sans-serif;font-weight:normal;color:#333;transform:scaleX(0.9000);transform-origin:0 0;">17</div>
<div class="t" style="left:7.32px;top:450.39px;font-size:10.17px;font-family:'Liberation Sans',sans-serif;font-weight:normal;color:#333;transform:scaleX(0.9000);transform-origin:0 0;">18</div>
<div class="t" style="left:7.32px;top:464.79px;font-size:10.17px;font-family:'Liberation Sans',sans-serif;font-weight:normal;color:#333;transform:scaleX(0.9000);transform-origin:0 0;">19</div>
<div class="t" style="left:7.32px;top:479.19px;font-size:10.17px;font-family:'Liberation Sans',sans-serif;font-weight:normal;color:#333;transform:scaleX(0.9000);transform-origin:0 0;">20</div>
<div class="a" style="left:2.00px;top:490.50px;width:20.00px;height:13.40px;background:#d2d2d2;"></div>
<div class="a" style="left:20.50px;top:490.00px;width:2.00px;height:14.40px;background:#217346;"></div>
<div class="t" style="left:7.32px;top:493.59px;font-size:10.17px;font-family:'Liberation Sans',sans-serif;font-weight:normal;color:#217346;transform:scaleX(0.9000);transform-origin:0 0;">21</div>
<div class="t" style="left:7.32px;top:507.99px;font-size:10.17px;font-family:'Liberation Sans',sans-serif;font-weight:normal;color:#333;transform:scaleX(0.9000);transform-origin:0 0;">22</div>
<div class="t" style="left:7.32px;top:536.79px;font-size:10.17px;font-family:'Liberation Sans',sans-serif;font-weight:normal;color:#333;transform:scaleX(0.9000);transform-origin:0 0;">23</div>
<div class="t" style="left:7.32px;top:565.59px;font-size:10.17px;font-family:'Liberation Sans',sans-serif;font-weight:normal;color:#333;transform:scaleX(0.9000);transform-origin:0 0;">24</div>
<div class="t" style="left:7.32px;top:579.99px;font-size:10.17px;font-family:'Liberation Sans',sans-serif;font-weight:normal;color:#333;transform:scaleX(0.9000);transform-origin:0 0;">25</div>
<div class="t" style="left:7.32px;top:594.39px;font-size:10.17px;font-family:'Liberation Sans',sans-serif;font-weight:normal;color:#333;transform:scaleX(0.9000);transform-origin:0 0;">26</div>
<div class="t" style="left:7.32px;top:608.79px;font-size:10.17px;font-family:'Liberation Sans',sans-serif;font-weight:normal;color:#333;transform:scaleX(0.9000);transform-origin:0 0;">27</div>
<div class="t" style="left:7.32px;top:623.19px;font-size:10.17px;font-family:'Liberation Sans',sans-serif;font-weight:normal;color:#333;transform:scaleX(0.9000);transform-origin:0 0;">28</div>
<div class="t" style="left:7.32px;top:637.59px;font-size:10.17px;font-family:'Liberation Sans',sans-serif;font-weight:normal;color:#333;transform:scaleX(0.9000);transform-origin:0 0;">29</div>
<div class="t" style="left:7.32px;top:651.99px;font-size:10.17px;font-family:'Liberation Sans',sans-serif;font-weight:normal;color:#333;transform:scaleX(0.9000);transform-origin:0 0;">30</div>
<div class="t" style="left:7.32px;top:666.39px;font-size:10.17px;font-family:'Liberation Sans',sans-serif;font-weight:normal;color:#333;transform:scaleX(0.9000);transform-origin:0 0;">31</div>
<div class="t" style="left:7.32px;top:680.79px;font-size:10.17px;font-family:'Liberation Sans',sans-serif;font-weight:normal;color:#333;transform:scaleX(0.9000);transform-origin:0 0;">32</div>
<div class="t" style="left:7.32px;top:695.19px;font-size:10.17px;font-family:'Liberation Sans',sans-serif;font-weight:normal;color:#333;transform:scaleX(0.9000);transform-origin:0 0;">33</div>
<div class="t" style="left:7.32px;top:709.59px;font-size:10.17px;font-family:'Liberation Sans',sans-serif;font-weight:normal;color:#333;transform:scaleX(0.9000);transform-origin:0 0;">34</div>
<div class="t" style="left:7.32px;top:723.99px;font-size:10.17px;font-family:'Liberation Sans',sans-serif;font-weight:normal;color:#333;transform:scaleX(0.9000);transform-origin:0 0;">35</div>
<div class="t" style="left:7.32px;top:738.39px;font-size:10.17px;font-family:'Liberation Sans',sans-serif;font-weight:normal;color:#333;transform:scaleX(0.9000);transform-origin:0 0;">36</div>
<div class="t" style="left:7.32px;top:752.79px;font-size:10.17px;font-family:'Liberation Sans',sans-serif;font-weight:normal;color:#333;transform:scaleX(0.9000);transform-origin:0 0;">37</div>
<div class="a" style="left:2.00px;top:754.00px;width:798.00px;height:22.00px;background:#e6e6e6;"></div>
<div class="t" style="left:229.75px;top:182.40px;font-size:16.42px;font-family:'Liberation Sans',sans-serif;font-weight:bold;color:#0e1f66;transform:scaleX(0.9721);transform-origin:0 0;">Sales Data</div>
<div class="t" style="left:25.00px;top:204.89px;font-size:10.17px;font-family:'Liberation Sans',sans-serif;font-weight:bold;color:#000;transform:scaleX(0.9453);transform-origin:0 0;">Top 5 Customers by Region</div>
<div class="t" style="left:25.00px;top:233.30px;font-size:10.76px;font-family:'Liberation Sans',sans-serif;font-weight:bold;color:#22407f;transform:scaleX(0.9008);transform-origin:0 0;">Germany</div>
<div class="t" style="left:25.00px;top:248.85px;font-size:9.16px;font-family:'Liberation Sans',sans-serif;font-weight:bold;color:#000;transform:scaleX(0.9798);transform-origin:0 0;">Customer</div>
<div class="t" style="left:121.30px;top:248.85px;font-size:9.16px;font-family:'Liberation Sans',sans-serif;font-weight:bold;color:#000;transform:scaleX(0.9062);transform-origin:0 0;">Sales</div>
<div class="t" style="left:27.50px;top:263.00px;font-size:9.45px;font-family:'Liberation Sans',sans-serif;font-weight:normal;color:#151515;transform:scaleX(0.9614);transform-origin:0 0;">Fokas</div>
<div class="t" style="left:124.20px;top:263.00px;font-size:9.45px;font-family:'Liberation Sans',sans-serif;font-weight:normal;color:#151515;transform:scaleX(1.0394);transform-origin:0 0;">kr</div>
<div class="t" style="left:149.80px;top:263.00px;font-size:9.45px;font-family:'Liberation Sans',sans-serif;font-weight:normal;color:#151515;transform:scaleX(1.0257);transform-origin:0 0;">886 915,98</div>
<div class="t" style="left:27.50px;top:277.40px;font-size:9.45px;font-family:'Liberation Sans',sans-serif;font-weight:normal;color:#151515;transform:scaleX(1.0578);transform-origin:0 0;">Information Bureau</div>
<div class="t" style="left:124.20px;top:277.40px;font-size:9.45px;font-family:'Liberation Sans',sans-serif;font-weight:normal;color:#151515;transform:scaleX(1.0394);transform-origin:0 0;">kr</div>
<div class="t" style="left:149.80px;top:277.40px;font-size:9.45px;font-family:'Liberation Sans',sans-serif;font-weight:normal;color:#151515;transform:scaleX(1.0413);transform-origin:0 0;">547 911,32</div>
<div class="t" style="left:27.50px;top:291.80px;font-size:9.45px;font-family:'Liberation Sans',sans-serif;font-weight:normal;color:#151515;transform:scaleX(1.0247);transform-origin:0 0;">Cam-Built</div>
<div class="t" style="left:25.00px;top:306.20px;font-size:9.45px;font-family:'Liberation Sans',sans-serif;font-weight:normal;color:#151515;transform:scaleX(1.0263);transform-origin:0 0;">Prpgramming Plus</div>
<div class="t" style="left:124.20px;top:306.20px;font-size:9.45px;font-family:'Liberation Sans',sans-serif;font-weight:normal;color:#151515;transform:scaleX(1.0394);transform-origin:0 0;">kr</div>
<div class="t" style="left:149.80px;top:306.20px;font-size:9.45px;font-family:'Liberation Sans',sans-serif;font-weight:normal;color:#151515;transform:scaleX(1.0257);transform-origin:0 0;">202 945,76</div>
<div class="t" style="left:27.50px;top:320.60px;font-size:9.45px;font-family:'Liberation Sans',sans-serif;font-weight:normal;color:#151515;transform:scaleX(0.9946);transform-origin:0 0;">Caprica&#160;&#160;Resources</div>
<div class="t" style="left:124.20px;top:320.60px;font-size:9.45px;font-family:'Liberation Sans',sans-serif;font-weight:normal;color:#151515;transform:scaleX(1.0394);transform-origin:0 0;">kr</div>
<div class="t" style="left:149.80px;top:320.60px;font-size:9.45px;font-family:'Liberation Sans',sans-serif;font-weight:normal;color:#151515;transform:scaleX(1.0257);transform-origin:0 0;">198 037,00</div>
<div class="t" style="left:27.50px;top:335.00px;font-size:9.45px;font-family:'Liberation Sans',sans-serif;font-weight:normal;color:#151515;transform:scaleX(1.0218);transform-origin:0 0;">Output Enablers</div>
<div class="t" style="left:124.20px;top:335.00px;font-size:9.45px;font-family:'Liberation Sans',sans-serif;font-weight:normal;color:#151515;transform:scaleX(1.0394);transform-origin:0 0;">kr</div>
<div class="t" style="left:149.80px;top:335.00px;font-size:9.45px;font-family:'Liberation Sans',sans-serif;font-weight:normal;color:#151515;transform:scaleX(1.0257);transform-origin:0 0;">164 736,87</div>
<div class="a" style="left:22.50px;top:259.10px;width:180.50px;height:1.00px;background:#222;"></div>
<div class="a" style="left:22.50px;top:273.50px;width:180.50px;height:1.00px;background:#222;"></div>
<div class="a" style="left:22.50px;top:287.90px;width:180.50px;height:1.00px;background:#222;"></div>
<div class="a" style="left:22.50px;top:316.70px;width:180.50px;height:1.00px;background:#222;"></div>
<div class="a" style="left:22.50px;top:331.10px;width:180.50px;height:1.00px;background:#222;"></div>
<div class="a" style="left:22.50px;top:345.50px;width:180.50px;height:1.00px;background:#222;"></div>
<div class="a" style="left:119.00px;top:259.10px;width:1.00px;height:87.40px;background:#222;"></div>
<div class="a" style="left:202.00px;top:259.10px;width:1.00px;height:87.40px;background:#222;"></div>
<div class="t" style="left:25.00px;top:362.90px;font-size:10.76px;font-family:'Liberation Sans',sans-serif;font-weight:bold;color:#22407f;transform:scaleX(0.8718);transform-origin:0 0;">Japan</div>
<div class="t" style="left:25.00px;top:378.45px;font-size:9.16px;font-family:'Liberation Sans',sans-serif;font-weight:bold;color:#000;transform:scaleX(0.9798);transform-origin:0 0;">Customer</div>
<div class="t" style="left:121.30px;top:378.45px;font-size:9.16px;font-family:'Liberation Sans',sans-serif;font-weight:bold;color:#000;transform:scaleX(0.9062);transform-origin:0 0;">Sales</div>
<div class="t" style="left:27.50px;top:392.60px;font-size:9.45px;font-family:'Liberation Sans',sans-serif;font-weight:normal;color:#151515;transform:scaleX(1.0396);transform-origin:0 0;">Vanstar</div>
<div class="t" style="left:124.20px;top:392.60px;font-size:9.45px;font-family:'Liberation Sans',sans-serif;font-weight:normal;color:#151515;transform:scaleX(1.0394);transform-origin:0 0;">kr</div>
<div class="t" style="left:140.30px;top:392.60px;font-size:9.45px;font-family:'Liberation Sans',sans-serif;font-weight:normal;color:#151515;transform:scaleX(1.0132);transform-origin:0 0;">1 641 594,45</div>
<div class="t" style="left:27.50px;top:407.00px;font-size:9.45px;font-family:'Liberation Sans',sans-serif;font-weight:normal;color:#151515;transform:scaleX(0.9333);transform-origin:0 0;">J. S. Lee Associates</div>
<div class="t" style="left:124.20px;top:407.00px;font-size:9.45px;font-family:'Liberation Sans',sans-serif;font-weight:normal;color:#151515;transform:scaleX(1.0394);transform-origin:0 0;">kr</div>
<div class="t" style="left:140.30px;top:407.00px;font-size:9.45px;font-family:'Liberation Sans',sans-serif;font-weight:normal;color:#151515;transform:scaleX(1.0132);transform-origin:0 0;">1 268 799,23</div>
<div class="t" style="left:27.50px;top:421.40px;font-size:9.45px;font-family:'Liberation Sans',sans-serif;font-weight:normal;color:#151515;transform:scaleX(1.0161);transform-origin:0 0;">RFI Corporation</div>
<div class="t" style="left:124.20px;top:421.40px;font-size:9.45px;font-family:'Liberation Sans',sans-serif;font-weight:normal;color:#151515;transform:scaleX(1.0394);transform-origin:0 0;">kr</div>
<div class="t" style="left:149.80px;top:421.40px;font-size:9.45px;font-family:'Liberation Sans',sans-serif;font-weight:normal;color:#151515;transform:scaleX(1.0257);transform-origin:0 0;">999 833,40</div>
<div class="t" style="left:27.50px;top:435.80px;font-size:9.45px;font-family:'Liberation Sans',sans-serif;font-weight:normal;color:#151515;transform:scaleX(0.9395);transform-origin:0 0;">Ra Co Amo</div>
<div class="t" style="left:124.20px;top:435.80px;font-size:9.45px;font-family:'Liberation Sans',sans-serif;font-weight:normal;color:#151515;transform:scaleX(1.0394);transform-origin:0 0;">kr</div>
<div class="t" style="left:149.80px;top:435.80px;font-size:9.45px;font-family:'Liberation Sans',sans-serif;font-weight:normal;color:#151515;transform:scaleX(1.0257);transform-origin:0 0;">578 543,06</div>
<div class="t" style="left:27.50px;top:450.20px;font-size:9.45px;font-family:'Liberation Sans',sans-serif;font-weight:normal;color:#151515;transform:scaleX(1.0418);transform-origin:0 0;">ValiCert</div>
<div class="t" style="left:124.20px;top:450.20px;font-size:9.45px;font-family:'Liberation Sans',sans-serif;font-weight:normal;color:#151515;transform:scaleX(1.0394);transform-origin:0 0;">kr</div>
<div class="t" style="left:149.80px;top:450.20px;font-size:9.45px;font-family:'Liberation Sans',sans-serif;font-weight:normal;color:#151515;transform:scaleX(1.0257);transform-origin:0 0;">477 059,63</div>
<div class="a" style="left:22.50px;top:388.70px;width:180.50px;height:1.00px;background:#222;"></div>
<div class="a" style="left:22.50px;top:403.10px;width:180.50px;height:1.00px;background:#222;"></div>
<div class="a" style="left:22.50px;top:417.50px;width:180.50px;height:1.00px;background:#222;"></div>
<div class="a" style="left:22.50px;top:431.90px;width:180.50px;height:1.00px;background:#222;"></div>
<div class="a" style="left:22.50px;top:446.30px;width:180.50px;height:1.00px;background:#222;"></div>
<div class="a" style="left:22.50px;top:460.70px;width:180.50px;height:1.00px;background:#222;"></div>
<div class="a" style="left:119.00px;top:388.70px;width:1.00px;height:73.00px;background:#222;"></div>
<div class="a" style="left:202.00px;top:388.70px;width:1.00px;height:73.00px;background:#222;"></div>
<div class="t" style="left:25.00px;top:478.10px;font-size:10.76px;font-family:'Liberation Sans',sans-serif;font-weight:bold;color:#22407f;transform:scaleX(0.8871);transform-origin:0 0;">Nordic</div>
<div class="t" style="left:25.00px;top:493.65px;font-size:9.16px;font-family:'Liberation Sans',sans-serif;font-weight:bold;color:#000;transform:scaleX(0.9798);transform-origin:0 0;">Customer</div>
<div class="t" style="left:121.30px;top:493.65px;font-size:9.16px;font-family:'Liberation Sans',sans-serif;font-weight:bold;color:#000;transform:scaleX(0.9062);transform-origin:0 0;">Sales</div>
<div class="t" style="left:27.50px;top:507.80px;font-size:9.45px;font-family:'Liberation Sans',sans-serif;font-weight:normal;color:#151515;transform:scaleX(1.1013);transform-origin:0 0;">Matradi</div>
<div class="t" style="left:124.20px;top:507.80px;font-size:9.45px;font-family:'Liberation Sans',sans-serif;font-weight:normal;color:#151515;transform:scaleX(1.0394);transform-origin:0 0;">kr</div>
<div class="t" style="left:140.30px;top:507.80px;font-size:9.45px;font-family:'Liberation Sans',sans-serif;font-weight:normal;color:#151515;transform:scaleX(1.0132);transform-origin:0 0;">1 730 093,38</div>
<div class="t" style="left:27.50px;top:522.20px;font-size:9.45px;font-family:'Liberation Sans',sans-serif;font-weight:normal;color:#151515;transform:scaleX(1.0292);transform-origin:0 0;">Home Automation</div>
<div class="t" style="left:25.00px;top:536.60px;font-size:9.45px;font-family:'Liberation Sans',sans-serif;font-weight:normal;color:#151515;transform:scaleX(0.9474);transform-origin:0 0;">(HAI)</div>
<div class="t" style="left:124.20px;top:536.60px;font-size:9.45px;font-family:'Liberation Sans',sans-serif;font-weight:normal;color:#151515;transform:scaleX(1.0394);transform-origin:0 0;">kr</div>
<div class="t" style="left:149.80px;top:536.60px;font-size:9.45px;font-family:'Liberation Sans',sans-serif;font-weight:normal;color:#151515;transform:scaleX(1.0257);transform-origin:0 0;">838 593,56</div>
<div class="t" style="left:27.50px;top:551.00px;font-size:9.45px;font-family:'Liberation Sans',sans-serif;font-weight:normal;color:#151515;transform:scaleX(1.0674);transform-origin:0 0;">Road Warrior</div>
<div class="t" style="left:25.00px;top:565.40px;font-size:9.45px;font-family:'Liberation Sans',sans-serif;font-weight:normal;color:#151515;transform:scaleX(1.0998);transform-origin:0 0;">International</div>
<div class="t" style="left:124.20px;top:565.40px;font-size:9.45px;font-family:'Liberation Sans',sans-serif;font-weight:normal;color:#151515;transform:scaleX(1.0394);transform-origin:0 0;">kr</div>
<div class="t" style="left:149.80px;top:565.40px;font-size:9.45px;font-family:'Liberation Sans',sans-serif;font-weight:normal;color:#151515;transform:scaleX(1.0257);transform-origin:0 0;">818 618,79</div>
<div class="t" style="left:27.50px;top:579.80px;font-size:9.45px;font-family:'Liberation Sans',sans-serif;font-weight:normal;color:#151515;">Salamander</div>
<div class="t" style="left:124.20px;top:579.80px;font-size:9.45px;font-family:'Liberation Sans',sans-serif;font-weight:normal;color:#151515;transform:scaleX(1.0394);transform-origin:0 0;">kr</div>
<div class="t" style="left:149.80px;top:579.80px;font-size:9.45px;font-family:'Liberation Sans',sans-serif;font-weight:normal;color:#151515;transform:scaleX(1.0257);transform-origin:0 0;">487 037,71</div>
<div class="t" style="left:27.50px;top:594.20px;font-size:9.45px;font-family:'Liberation Sans',sans-serif;font-weight:normal;color:#151515;">Homebound</div>
<div class="t" style="left:124.20px;top:594.20px;font-size:9.45px;font-family:'Liberation Sans',sans-serif;font-weight:normal;color:#151515;transform:scaleX(1.0394);transform-origin:0 0;">kr</div>
<div class="t" style="left:149.80px;top:594.20px;font-size:9.45px;font-family:'Liberation Sans',sans-serif;font-weight:normal;color:#151515;transform:scaleX(1.0257);transform-origin:0 0;">455 956,81</div>
<div class="a" style="left:22.50px;top:503.90px;width:180.50px;height:1.00px;background:#222;"></div>
<div class="a" style="left:22.50px;top:518.30px;width:180.50px;height:1.00px;background:#222;"></div>
<div class="a" style="left:22.50px;top:547.10px;width:180.50px;height:1.00px;background:#222;"></div>
<div class="a" style="left:22.50px;top:575.90px;width:180.50px;height:1.00px;background:#222;"></div>
<div class="a" style="left:22.50px;top:590.30px;width:180.50px;height:1.00px;background:#222;"></div>
<div class="a" style="left:22.50px;top:604.70px;width:180.50px;height:1.00px;background:#222;"></div>
<div class="a" style="left:119.00px;top:503.90px;width:1.00px;height:101.80px;background:#222;"></div>
<div class="a" style="left:202.00px;top:503.90px;width:1.00px;height:101.80px;background:#222;"></div>
<div class="t" style="left:25.00px;top:622.10px;font-size:10.76px;font-family:'Liberation Sans',sans-serif;font-weight:bold;color:#22407f;transform:scaleX(0.8632);transform-origin:0 0;">Spain</div>
<div class="t" style="left:25.00px;top:637.65px;font-size:9.16px;font-family:'Liberation Sans',sans-serif;font-weight:bold;color:#000;transform:scaleX(0.9798);transform-origin:0 0;">Customer</div>
<div class="t" style="left:121.30px;top:637.65px;font-size:9.16px;font-family:'Liberation Sans',sans-serif;font-weight:bold;color:#000;transform:scaleX(0.9062);transform-origin:0 0;">Sales</div>
<div class="t" style="left:27.50px;top:651.80px;font-size:9.45px;font-family:'Liberation Sans',sans-serif;font-weight:normal;color:#151515;transform:scaleX(1.0639);transform-origin:0 0;">Pacific Avionics</div>
<div class="t" style="left:124.20px;top:651.80px;font-size:9.45px;font-family:'Liberation Sans',sans-serif;font-weight:normal;color:#151515;transform:scaleX(1.0394);transform-origin:0 0;">kr</div>
<div class="t" style="left:149.80px;top:651.80px;font-size:9.45px;font-family:'Liberation Sans',sans-serif;font-weight:normal;color:#151515;transform:scaleX(1.0257);transform-origin:0 0;">445 373,93</div>
<div class="t" style="left:27.50px;top:666.20px;font-size:9.45px;font-family:'Liberation Sans',sans-serif;font-weight:normal;color:#151515;transform:scaleX(0.9889);transform-origin:0 0;">Dci</div>
<div class="t" style="left:124.20px;top:666.20px;font-size:9.45px;font-family:'Liberation Sans',sans-serif;font-weight:normal;color:#151515;transform:scaleX(1.0394);transform-origin:0 0;">kr</div>
<div class="t" style="left:149.80px;top:666.20px;font-size:9.45px;font-family:'Liberation Sans',sans-serif;font-weight:normal;color:#151515;transform:scaleX(1.0257);transform-origin:0 0;">354 276,33</div>
<div class="t" style="left:27.50px;top:680.60px;font-size:9.45px;font-family:'Liberation Sans',sans-serif;font-weight:normal;color:#151515;transform:scaleX(0.9738);transform-origin:0 0;">Ravenwerks</div>
<div class="t" style="left:124.20px;top:680.60px;font-size:9.45px;font-family:'Liberation Sans',sans-serif;font-weight:normal;color:#151515;transform:scaleX(1.0394);transform-origin:0 0;">kr</div>
<div class="t" style="left:149.80px;top:680.60px;font-size:9.45px;font-family:'Liberation Sans',sans-serif;font-weight:normal;color:#151515;transform:scaleX(1.0257);transform-origin:0 0;">303 706,47</div>
<div class="t" style="left:27.50px;top:695.00px;font-size:9.45px;font-family:'Liberation Sans',sans-serif;font-weight:normal;color:#151515;">A1 Datacom Supply</div>
<div class="t" style="left:124.20px;top:695.00px;font-size:9.45px;font-family:'Liberation Sans',sans-serif;font-weight:normal;color:#151515;transform:scaleX(1.0394);transform-origin:0 0;">kr</div>
<div class="t" style="left:149.80px;top:695.00px;font-size:9.45px;font-family:'Liberation Sans',sans-serif;font-weight:normal;color:#151515;transform:scaleX(1.0257);transform-origin:0 0;">259 599,52</div>
<div class="t" style="left:27.50px;top:709.40px;font-size:9.45px;font-family:'Liberation Sans',sans-serif;font-weight:normal;color:#151515;transform:scaleX(1.0546);transform-origin:0 0;">Harts Unlimited</div>
<div class="t" style="left:124.20px;top:709.40px;font-size:9.45px;font-family:'Liberation Sans',sans-serif;font-weight:normal;color:#151515;transform:scaleX(1.0394);transform-origin:0 0;">kr</div>
<div class="t" style="left:149.80px;top:709.40px;font-size:9.45px;font-family:'Liberation Sans',sans-serif;font-weight:normal;color:#151515;transform:scaleX(1.0574);transform-origin:0 0;">252 111,95</div>
<div class="a" style="left:22.50px;top:647.90px;width:180.50px;height:1.00px;background:#222;"></div>
<div class="a" style="left:22.50px;top:662.30px;width:180.50px;height:1.00px;background:#222;"></div>
<div class="a" style="left:22.50px;top:676.70px;width:180.50px;height:1.00px;background:#222;"></div>
<div class="a" style="left:22.50px;top:691.10px;width:180.50px;height:1.00px;background:#222;"></div>
<div class="a" style="left:22.50px;top:705.50px;width:180.50px;height:1.00px;background:#222;"></div>
<div class="a" style="left:22.50px;top:719.90px;width:180.50px;height:1.00px;background:#222;"></div>
<div class="a" style="left:119.00px;top:647.90px;width:1.00px;height:73.00px;background:#222;"></div>
<div class="a" style="left:202.00px;top:647.90px;width:1.00px;height:73.00px;background:#222;"></div>
<div class="t" style="left:25.00px;top:737.30px;font-size:10.76px;font-family:'Liberation Sans',sans-serif;font-weight:bold;color:#22407f;transform:scaleX(0.8171);transform-origin:0 0;">UK</div>
<div class="a" style="left:655.00px;top:489.00px;width:47.50px;height:15.90px;background:transparent;border:2px solid #217346"></div>
<div class="a" style="left:700.00px;top:502.40px;width:4.00px;height:4.00px;background:#217346;"></div>
<div class="a" style="left:230.75px;top:215.75px;width:344.50px;height:193.50px;background:#fff;"></div>
<div class="t" style="left:231.30px;top:219.09px;font-size:10.17px;font-family:'Liberation Sans',sans-serif;font-weight:bold;color:#7b7b7b;transform:scaleX(0.9906);transform-origin:0 0;">Total Sales and Margin</div>
<div class="t" style="left:231.60px;top:286.74px;font-size:17.44px;font-family:'Liberation Sans',sans-serif;font-weight:normal;color:#595959;transform:scaleX(0.9494);transform-origin:0 0;-webkit-text-stroke:0;">Sales</div>
<svg style="left:0;top:0" width="800" height="794"><path d="M 239.93 325.92 L 245.00 320.32 L 245.00 348.28 M 238.32 348.28 L 251.68 348.28 M 269.50 320.32 C 274.01 320.32 277.68 326.59 277.68 334.30 C 277.68 342.01 274.01 348.28 269.50 348.28 C 264.99 348.28 261.32 342.01 261.32 334.30 C 261.32 326.59 264.99 320.32 269.50 320.32 Z M 263.61 341.57 L 275.39 327.03 M 299.54 348.28 L 299.54 320.32 L 286.32 339.89 L 304.68 339.89 M 330.50 320.32 C 335.56 320.32 339.68 324.21 339.68 328.99 C 339.68 333.77 335.56 337.65 330.50 337.65 C 325.44 337.65 321.32 333.77 321.32 328.99 C 321.32 324.21 325.44 320.32 330.50 320.32 Z M 339.12 331.50 L 328.30 348.28 M 351.32 348.28 L 351.32 320.32 L 362.00 338.21 L 372.68 320.32 L 372.68 348.28" fill="none" stroke="#f03c16" stroke-width="2.65" stroke-linejoin="miter" stroke-linecap="butt"/><rect x="311.00" y="344.60" width="5.00" height="5.00" fill="#f03c16"/></svg>
<svg style="left:0;top:0" width="800" height="420"><path d="M384.8 327.3 h9.7 l-4.85 6.3z" fill="#f03c16"/><path d="M474.3 329 h5.1 l-2.55 -3.9z" fill="#3cba3c"/></svg>
<svg style="left:0;top:0" width="800" height="794"><path d="M 407.20 336.00 L 407.20 322.10 L 400.40 331.83 L 409.85 331.83 M 414.83 324.88 C 415.50 321.54 421.97 321.27 422.14 325.57 C 422.22 328.22 420.14 328.63 417.65 328.63 C 420.48 328.63 422.80 329.75 422.80 332.25 C 422.80 336.56 415.50 336.83 414.50 333.22 M 432.23 325.16 C 432.73 321.40 439.79 321.27 439.79 325.85 C 439.79 329.33 434.56 331.55 431.90 336.00 L 440.20 336.00 M 452.27 322.10 L 445.96 322.10 L 445.30 328.49 C 447.29 327.10 453.10 326.27 453.10 331.55 C 453.10 336.69 446.04 336.69 444.80 333.50 M 457.20 336.00 L 457.20 322.10 L 463.35 331.00 L 469.50 322.10 L 469.50 336.00" fill="none" stroke="#3cba3c" stroke-width="1.8" stroke-linejoin="miter" stroke-linecap="butt"/><rect x="425.90" y="334.60" width="2.30" height="2.30" fill="#3cba3c"/></svg>
<div class="t" style="left:398.70px;top:344.62px;font-size:8.72px;font-family:'Liberation Sans',sans-serif;font-weight:normal;color:#7a7a7a;transform:scaleX(0.9871);transform-origin:0 0;-webkit-text-stroke:0;">Margin</div>
<div class="a" style="left:230.75px;top:547.25px;width:459.50px;height:193.50px;background:#fff;"></div>
<div class="t" style="left:231.60px;top:549.90px;font-size:10.76px;font-family:'Liberation Sans',sans-serif;font-weight:bold;color:#6e6e6e;transform:scaleX(0.9234);transform-origin:0 0;">Top 5 Customers</div>
<div class="a" style="left:350.00px;top:570.50px;width:1.00px;height:147.50px;background:#e0e0e0;"></div>
<div class="a" style="left:462.20px;top:570.50px;width:1.00px;height:147.50px;background:#e0e0e0;"></div>
<div class="a" style="left:574.40px;top:570.50px;width:1.00px;height:147.50px;background:#e0e0e0;"></div>
<div class="a" style="left:686.60px;top:570.50px;width:1.00px;height:147.50px;background:#e0e0e0;"></div>
<div class="a" style="left:350.00px;top:571.00px;width:1.20px;height:142.50px;background:#c8c8c8;"></div>
<div class="a" style="left:350.00px;top:712.50px;width:338.00px;height:1.20px;background:#d0d0d0;"></div>
<div class="a" style="left:351.00px;top:575.00px;width:318.71px;height:19.50px;background:#4477aa;"></div>
<div class="t" style="left:319.90px;top:580.63px;font-size:9.30px;font-family:'Liberation Sans',sans-serif;font-weight:normal;color:#6b6b6b;transform:scaleX(0.8625);transform-origin:0 0;-webkit-text-stroke:0;">Paracel</div>
<div class="t" style="left:644.70px;top:580.92px;font-size:8.72px;font-family:'Liberation Sans',sans-serif;font-weight:normal;color:#fff;transform:scaleX(0.9198);transform-origin:0 0;-webkit-text-stroke:0;">5.69M</div>
<div class="a" style="left:351.00px;top:603.50px;width:315.34px;height:19.50px;background:#4477aa;"></div>
<div class="t" style="left:307.50px;top:609.13px;font-size:9.30px;font-family:'Liberation Sans',sans-serif;font-weight:normal;color:#6b6b6b;transform:scaleX(0.8768);transform-origin:0 0;-webkit-text-stroke:0;">PageWave</div>
<div class="t" style="left:641.60px;top:609.42px;font-size:8.72px;font-family:'Liberation Sans',sans-serif;font-weight:normal;color:#fff;transform:scaleX(0.9074);transform-origin:0 0;-webkit-text-stroke:0;">5.63M</div>
<div class="a" style="left:351.00px;top:632.00px;width:286.17px;height:19.50px;background:#4477aa;"></div>
<div class="t" style="left:274.00px;top:637.63px;font-size:9.30px;font-family:'Liberation Sans',sans-serif;font-weight:normal;color:#6b6b6b;transform:scaleX(0.8727);transform-origin:0 0;-webkit-text-stroke:0;">Deak-Perera Group.</div>
<div class="t" style="left:640.60px;top:637.92px;font-size:8.72px;font-family:'Liberation Sans',sans-serif;font-weight:normal;color:#777;transform:scaleX(0.9623);transform-origin:0 0;-webkit-text-stroke:0;">5.11M</div>
<div class="a" style="left:351.00px;top:660.50px;width:254.19px;height:19.50px;background:#4477aa;"></div>
<div class="t" style="left:317.50px;top:666.13px;font-size:9.30px;font-family:'Liberation Sans',sans-serif;font-weight:normal;color:#6b6b6b;transform:scaleX(0.9091);transform-origin:0 0;-webkit-text-stroke:0;">Talarian</div>
<div class="t" style="left:608.60px;top:666.42px;font-size:8.72px;font-family:'Liberation Sans',sans-serif;font-weight:normal;color:#777;transform:scaleX(0.9322);transform-origin:0 0;-webkit-text-stroke:0;">4.54M</div>
<div class="a" style="left:351.00px;top:689.00px;width:201.46px;height:19.50px;background:#4477aa;"></div>
<div class="t" style="left:312.50px;top:694.63px;font-size:9.30px;font-family:'Liberation Sans',sans-serif;font-weight:normal;color:#6b6b6b;transform:scaleX(0.9299);transform-origin:0 0;-webkit-text-stroke:0;">Userland</div>
<div class="t" style="left:555.50px;top:694.92px;font-size:8.72px;font-family:'Liberation Sans',sans-serif;font-weight:normal;color:#777;transform:scaleX(0.9276);transform-origin:0 0;-webkit-text-stroke:0;">3.6M</div>
<div class="t" style="left:350.80px;top:723.38px;font-size:9.59px;font-family:'Liberation Sans',sans-serif;font-weight:normal;color:#777;transform:scaleX(0.8264);transform-origin:0 0;-webkit-text-stroke:0;">0</div>
<div class="t" style="left:456.00px;top:723.38px;font-size:9.59px;font-family:'Liberation Sans',sans-serif;font-weight:normal;color:#777;transform:scaleX(0.9599);transform-origin:0 0;-webkit-text-stroke:0;">2M</div>
<div class="t" style="left:569.60px;top:723.38px;font-size:9.59px;font-family:'Liberation Sans',sans-serif;font-weight:normal;color:#777;transform:scaleX(0.9674);transform-origin:0 0;-webkit-text-stroke:0;">4M</div>
<div class="t" style="left:676.20px;top:723.38px;font-size:9.59px;font-family:'Liberation Sans',sans-serif;font-weight:normal;color:#777;transform:scaleX(0.8999);transform-origin:0 0;-webkit-text-stroke:0;">6M</div>
<div class="a" style="left:784.00px;top:163.00px;width:16.00px;height:591.00px;background:#e6e6e6;"></div>
<div class="a" style="left:785.50px;top:164.50px;width:12.00px;height:12.00px;background:#fff;border:1px solid #c6c6c6"></div>
<div class="a" style="left:785.30px;top:176.50px;width:12.30px;height:350.50px;background:#fff;border:1px solid #bdbdbd"></div>
<div class="a" style="left:785.50px;top:527.00px;width:12.00px;height:216.00px;background:#dadada;"></div>
<div class="a" style="left:786.00px;top:743.00px;width:11.50px;height:11.50px;background:#fff;border:1px solid #c6c6c6"></div>
<div class="a" style="left:2.00px;top:754.50px;width:798.00px;height:21.50px;background:#e6e6e6;"></div>
<div class="a" style="left:2.00px;top:754.00px;width:781.50px;height:1.00px;background:#c6c6c6;"></div>
<div class="a" style="left:82.00px;top:753.80px;width:51.00px;height:20.20px;background:#fff;border-left:1px solid #c6c6c6;border-right:1px solid #c6c6c6"></div>
<div class="a" style="left:82.50px;top:772.00px;width:50.00px;height:2.00px;background:#217346;"></div>
<div class="t" style="left:91.50px;top:759.65px;font-size:11.05px;font-family:'Liberation Sans',sans-serif;font-weight:bold;color:#217346;transform:scaleX(0.8832);transform-origin:0 0;">Sheet1</div>
<div class="a" style="left:494.50px;top:760.50px;width:11.50px;height:11.50px;background:#fff;border:1px solid #c6c6c6"></div>
<div class="a" style="left:506.00px;top:760.50px;width:247.00px;height:11.50px;background:#fff;border:1px solid #c6c6c6"></div>
<div class="a" style="left:753.00px;top:760.50px;width:19.50px;height:11.50px;background:#d9d9d9;"></div>
<div class="a" style="left:773.30px;top:760.50px;width:11.20px;height:11.50px;background:#fff;border:1px solid #c6c6c6"></div>
<div class="a" style="left:2.00px;top:754.50px;width:798.00px;height:39.50px;background:transparent;"></div>
<div class="a" style="left:2.00px;top:776.00px;width:798.00px;height:18.00px;background:#f3f3f3;"></div>
<div class="a" style="left:2.00px;top:775.50px;width:798.00px;height:1.00px;background:#d6d6d6;"></div>
<div class="t" style="left:8.50px;top:780.01px;font-size:10.03px;font-family:'Liberation Sans',sans-serif;font-weight:normal;color:#444;transform:scaleX(0.8108);transform-origin:0 0;">Ready</div>
<div class="a" style="left:562.50px;top:776.50px;width:28.80px;height:17.50px;background:#d2d2d2;"></div>
<svg style="left:0;top:0" width="800" height="794">
<g fill="none" stroke="#666" stroke-width="1">
<rect x="572.5" y="780.5" width="10" height="9"/>
<path d="M572.5 783.5 h10 M572.5 786.5 h10 M575.8 780.5 v9 M579.2 780.5 v9"/>
<rect x="601.5" y="780.5" width="11" height="9"/>
<rect x="604.5" y="782.5" width="5" height="5"/>
<rect x="631.5" y="780.5" width="11" height="9"/>
<path d="M635.5 780.5 v4 h4 v-4"/>
</g>
<path d="M655.5 785.5 h5" stroke="#555" stroke-width="1.5"/>
<path d="M664 785.5 h83" stroke="#aaa" stroke-width="1"/>
<rect x="697.5" y="781" width="3.5" height="9" fill="#555"/>
<path d="M704 783.5 v4" stroke="#999" stroke-width="1"/>
<path d="M746.5 785.5 h7 M750 782 v7" stroke="#555" stroke-width="1.6"/>
</svg>
<div class="t" style="left:765.90px;top:779.81px;font-size:10.03px;font-family:'Liberation Sans',sans-serif;font-weight:normal;color:#444;transform:scaleX(0.8265);transform-origin:0 0;">90 %</div>
<svg style="left:0;top:0" width="800" height="794">
<path d="M788.5 172 l3 -3 l3 3z" fill="#555"/>
<path d="M788.5 747 h6 l-3 3z" fill="#555"/>
<path d="M777.5 762.5 v6 l3 -3z" fill="#555"/>
<path d="M502 762.5 v6 l-3 -3z" fill="#555"/>
<g fill="#999"><circle cx="481" cy="761.5" r="0.7"/><circle cx="481" cy="765.5" r="0.7"/><circle cx="481" cy="769.5" r="0.7"/></g>
<path d="M26.5 762 v6.5 l-3.3 -3.25z M47 762 v6.5 l3.3 -3.25z" fill="#c4c4c4"/>
<circle cx="166" cy="765" r="6" fill="none" stroke="#777" stroke-width="1.1"/>
<path d="M162.5 765 h7 M166 761.5 v7" stroke="#777" stroke-width="1.2"/>
</svg>
</body></html>
